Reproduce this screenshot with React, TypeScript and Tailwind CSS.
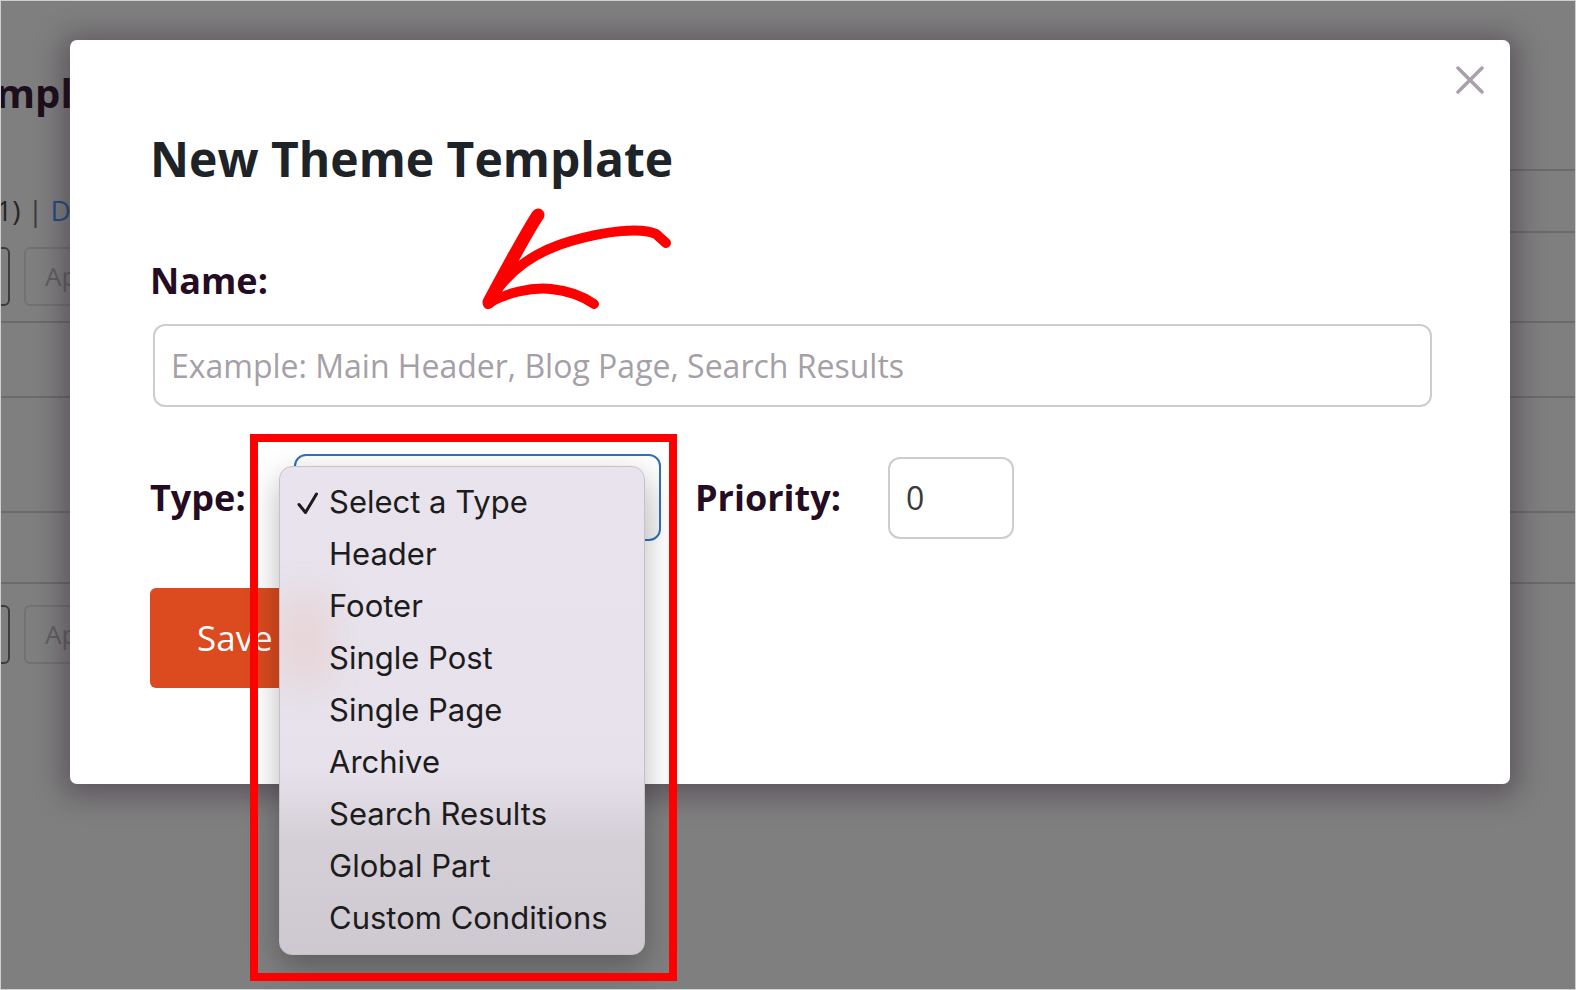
import React from 'react';

const typeOptions = [
  'Select a Type',
  'Header',
  'Footer',
  'Single Post',
  'Single Page',
  'Archive',
  'Search Results',
  'Global Part',
  'Custom Conditions',
];

const openSans = { fontFamily: '"Open Sans", "Noto Sans", sans-serif' };
const systemUi = { fontFamily: 'Inter, "Liberation Sans", sans-serif' };

// Dimmed admin page sitting behind the modal overlay
const BackgroundPage = () => (
  <div className="flex flex-col" style={openSans}>
    <div className="pt-[72px] h-[112px]">
      <h1 className="-ml-[52px] text-[40px] leading-[40px] font-bold text-[#1c0e1b] whitespace-nowrap">
        Templates
      </h1>
    </div>
    <div className="mt-[56px] flex h-[64px]">
      <div className="mt-[27px] -ml-[13px] text-[28px] leading-[28px] text-[#262626] whitespace-nowrap">
        (1) <span className="text-[#3a3a3a]">|</span> <span className="text-[#1e4f80]">Draft</span>
      </div>
      <div className="ml-auto -mr-[100px] w-[380px] h-[64px] border-y-2 border-[#6b6b6b]" />
    </div>
    <div className="mt-[14px] flex h-[59px]">
      <div className="-ml-[71px] w-[80px] h-full rounded-md border-2 border-[#3c3c3c]" />
      <div className="ml-[14px] w-[130px] h-full rounded-md border-2 border-[#727272] flex items-center pl-[19px] text-[26px] text-[#606060]">
        Apply
      </div>
    </div>
    <div className="mt-[15px] border-t-2 border-[#6b6b6b]">
      <div className="h-[75px] border-b-2 border-[#6b6b6b]" />
      <div className="h-[115px] border-b-2 border-[#6b6b6b]" />
      <div className="h-[71px] border-b-2 border-[#6b6b6b]" />
    </div>
    <div className="mt-[21px] flex h-[59px]">
      <div className="-ml-[71px] w-[80px] h-full rounded-md border-2 border-[#3c3c3c]" />
      <div className="ml-[14px] w-[130px] h-full rounded-md border-2 border-[#727272] flex items-center pl-[19px] text-[26px] text-[#606060]">
        Apply
      </div>
    </div>
  </div>
);

const TypeMenu = () => (
  <div
    className="absolute left-[278px] top-[465px] w-[366px] h-[489px] rounded-[13px] border border-[#c6c0c9] overflow-hidden shadow-[0_12px_32px_rgba(0,0,0,0.28)] bg-[linear-gradient(180deg,#e8e3ec_0%,#e6e1ea_62%,#d5cfd8_76%,#cec8d1_100%)]"
    style={systemUi}
  >
    <div className="absolute left-0 top-[125px] w-[50px] h-[95px] rounded-full bg-[#e9a48f]/20 blur-lg" />
    <div className="relative pt-[9px] flex flex-col">
      {typeOptions.map((option, i) => (
        <div key={option} className="relative h-[52px] leading-[52px] pl-[49px] text-[31px] text-[#1c1c1c] whitespace-nowrap">
          {i === 0 && (
            <svg className="absolute left-[17px] top-[16px]" width="22" height="24" viewBox="0 0 22 24" fill="none">
              <path d="M2 12.5 L8.5 20.5 L19.5 2" stroke="#1c1c1c" strokeWidth="3" strokeLinecap="round" strokeLinejoin="round" />
            </svg>
          )}
          {option}
        </div>
      ))}
    </div>
  </div>
);

const HandArrow = () => (
  <svg className="absolute left-[470px] top-[200px]" width="210" height="120" viewBox="0 0 210 120" fill="none">
    <path
      d="M17 103 C35 70 65 50 100 40 C135 30 170 26 185 33 L195 42"
      stroke="#ff0000"
      strokeWidth="10"
      strokeLinecap="round"
      strokeLinejoin="round"
    />
    <path d="M67 14 C55 32 40 60 18 101" stroke="#ff0000" strokeWidth="13" strokeLinecap="round" />
    <path d="M18 102 C35 92 60 86 80 88 C100 90 113 96 123 103" stroke="#ff0000" strokeWidth="10" strokeLinecap="round" />
  </svg>
);

const NewTemplateModal = () => (
  <div
    className="absolute left-[69px] top-[39px] w-[1440px] h-[744px] bg-white rounded-[7px] shadow-[0_4px_28px_8px_rgba(40,20,40,0.38)] pl-[80px] pt-[95px]"
    style={openSans}
  >
    <button className="absolute right-[26px] top-[26px] w-[28px] h-[28px]" aria-label="Close">
      <svg width="28" height="28" viewBox="0 0 28 28" fill="none">
        <path d="M2 2 L26 26 M26 2 L2 26" stroke="#a8a1aa" strokeWidth="3.5" strokeLinecap="round" />
      </svg>
    </button>

    <h2 className="text-[48px] leading-[48px] font-bold text-[#1d2327]">New Theme Template</h2>

    <label className="block mt-[80px] text-[36px] leading-[36px] font-bold text-[#240c22]">Name:</label>
    <div className="mt-[25px] ml-[3px] w-[1279px] h-[83px] rounded-[12px] border-2 border-[#d0cbd0] flex items-center pl-[16px] text-[32px] text-[#a59fa7]">
      Example: Main Header, Blog Page, Search Results
    </div>

    <div className="mt-[47px] flex items-center h-[87px]">
      <div className="w-[144px] text-[36px] font-bold text-[#240c22]">Type:</div>
      <div className="w-[367px] h-[87px] rounded-[12px] border-2 border-[#2f72b5] bg-[linear-gradient(180deg,#ffffff,#f4f4f4)]" />
      <div className="ml-[34px] w-[193px] text-[36px] font-bold text-[#240c22]">Priority:</div>
      <div className="w-[126px] h-[82px] rounded-[12px] border-2 border-[#d0cbd0] flex items-center pl-[16px] text-[32px] text-[#3a3a3a]">
        0
      </div>
    </div>

    <button className="mt-[47px] w-[173px] h-[100px] rounded-[6px] bg-[#dc4a1f] text-white text-[35px] font-medium flex items-center pl-[47px]">
      Save
    </button>
  </div>
);

export default function App() {
  return (
    <div className="relative w-[1576px] h-[990px] overflow-hidden bg-[#7f7f7f] border border-[#cfcfcf]">
      <BackgroundPage />
      <NewTemplateModal />
      <TypeMenu />
      <HandArrow />
      <div className="absolute left-[249px] top-[433px] w-[427px] h-[547px] border-8 border-[#ff0000]" />
    </div>
  );
}
